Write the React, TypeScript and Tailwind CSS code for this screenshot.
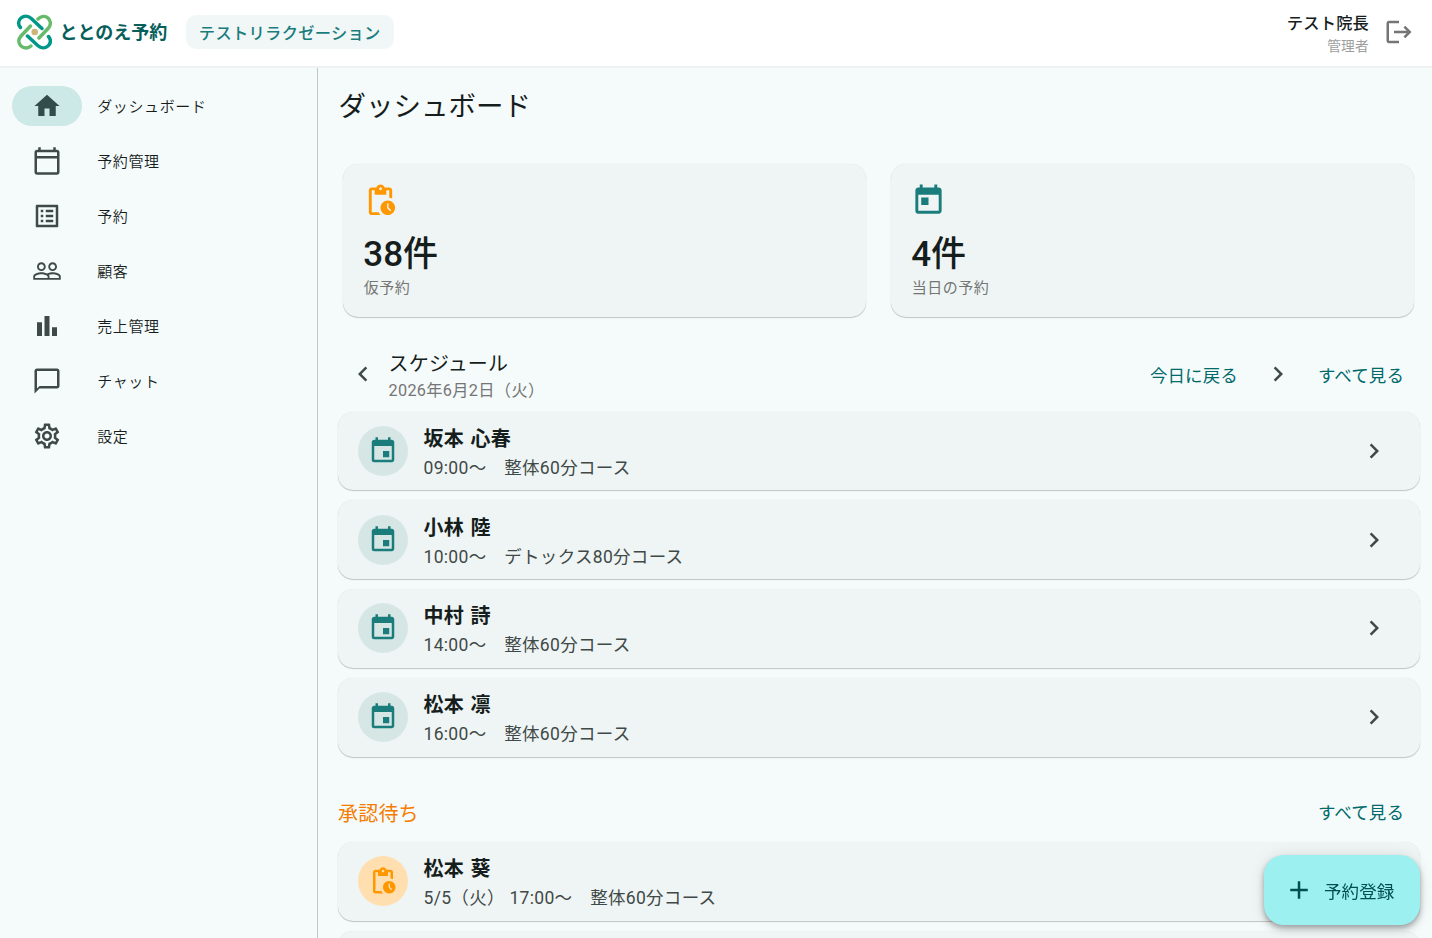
import React from 'react';
import type { IconType } from 'react-icons';
import {
    MdAdd, MdBarChart, MdChevronLeft, MdChevronRight, MdEvent, MdHome, MdLogout, MdOutlineCalendarToday,
    MdOutlineChatBubbleOutline, MdOutlineListAlt, MdOutlineSettings, MdPendingActions, MdPeopleOutline, MdToday,
} from 'react-icons/md';

interface NavItem {
    label: string;
    icon: IconType;
    active?: boolean;
}

interface Booking {
    name: string;
    detail: string;
}

const NAV_ITEMS: NavItem[] = [
    { label: 'ダッシュボード', icon: MdHome, active: true },
    { label: '予約管理', icon: MdOutlineCalendarToday },
    { label: '予約', icon: MdOutlineListAlt },
    { label: '顧客', icon: MdPeopleOutline },
    { label: '売上管理', icon: MdBarChart },
    { label: 'チャット', icon: MdOutlineChatBubbleOutline },
    { label: '設定', icon: MdOutlineSettings },
];

const SCHEDULE: Booking[] = [
    { name: '坂本 心春', detail: '09:00〜　整体60分コース' },
    { name: '小林 陸', detail: '10:00〜　デトックス80分コース' },
    { name: '中村 詩', detail: '14:00〜　整体60分コース' },
    { name: '松本 凛', detail: '16:00〜　整体60分コース' },
];

const PENDING: Booking[] = [
    { name: '松本 葵', detail: '5/5（火） 17:00〜　整体60分コース' },
];

const CARD = 'rounded-[15px] bg-[#eff5f4] shadow-[0_1px_1px_rgba(0,0,0,0.21),0_0_1px_rgba(0,0,0,0.12)]';

const Logo: React.FC = () => (
    <div className="flex items-center">
        <svg className="w-9 h-9 shrink-0" viewBox="0 0 36 36" fill="none" strokeWidth="3.5" strokeLinecap="round">
            <path d="M22 5 C25 2 29 1.500 32 4 C35 7 35 11 32.500 14 L23 24" stroke="#66bb6a" />
            <path d="M15 32 C12 34.500 8 34.500 5 32 C2 29 2.300 25 5 22 L14.500 12" stroke="#66bb6a" />
            <path d="M4.500 13.500 C1.800 10.500 2 6.500 5 4 C8 1.500 12 1.500 15 4.200 L26 14.500" stroke="#009688" />
            <path d="M32.500 22.500 C35.200 25.500 35 29.500 32 32 C29 34.500 25 34.500 22 31.800 L11.500 22" stroke="#009688" />
            <circle cx="18.700" cy="18" r="3.3" fill="#cdb578" />
        </svg>
        <span className="mt-[1px] ml-[7.5px] text-[18px] leading-6 font-bold text-[#075e5b] whitespace-nowrap">ととのえ予約</span>
    </div>
);

const Header: React.FC = () => (
    <header className="h-[68px] shrink-0 flex items-center justify-between bg-white border-b-2 border-[#eef2f2] pl-4 pr-[18px] pb-[2px]">
        <div className="flex items-center">
            <Logo />
            <div className="ml-[18.5px] h-[34px] px-[13px] pt-[4px] flex items-center rounded-[10px] bg-[#f1f7f7] text-[16.25px] tracking-[0.31px] font-medium text-[#1b7c7c] whitespace-nowrap">
                テストリラクゼーション
            </div>
        </div>
        <div className="flex items-center">
            <div className="pt-[4px] text-right whitespace-nowrap">
                <p className="text-[16.25px] leading-[23px] tracking-[0.18px] font-medium text-[#161d1d]">テスト院長</p>
                <p className="text-[13.75px] leading-[22px] tracking-[0.2px] text-[#9e9e9e]">管理者</p>
            </div>
            <button className="ml-[15px] text-[#757575]" aria-label="ログアウト">
                <MdLogout size={30} />
            </button>
        </div>
    </header>
);

const Sidebar: React.FC = () => (
    <nav className="w-[318px] shrink-0 border-r border-[#bec8c8] pt-[10px] pl-3">
        {NAV_ITEMS.map(({ label, icon: Icon, active }) => (
            <a key={label} className="h-[55px] flex items-center cursor-pointer">
                <span className={`w-[70px] h-10 rounded-full flex items-center justify-center ${active ? 'bg-[#cce8e7] text-[#324b4b]' : 'text-[#3f4948]'}`}>
                    <Icon size={30} />
                </span>
                <span className="ml-[15.2px] pt-[3px] text-[15px] font-[350] tracking-[0.63px] text-[#161d1d]">{label}</span>
            </a>
        ))}
    </nav>
);

interface StatCardProps {
    icon: IconType;
    iconClass: string;
    value: string;
    label: string;
}

const StatCard: React.FC<StatCardProps> = ({ icon: Icon, iconClass, value, label }) => (
    <div className={`flex-1 h-[153px] px-5 pt-[19px] ${CARD}`}>
        <Icon size={35} className={iconClass} />
        <p className="mt-[15px] text-[35px] leading-[44px] font-medium text-[#161d1d]">{value}</p>
        <p className="mt-[1px] ml-[0.5px] text-[15px] leading-5 tracking-[0.5px] text-[#757575]">{label}</p>
    </div>
);

const BookingRow: React.FC<{ booking: Booking; pending?: boolean }> = ({ booking, pending }) => (
    <div className={`h-[78.75px] shrink-0 flex items-center pl-5 pr-[30.5px] ${CARD}`}>
        <div className={`w-[50px] h-[50px] rounded-full flex items-center justify-center ${pending ? 'bg-[#ffdfb0] text-[#ff9800]' : 'bg-[#d5e6e5] text-[#1b7c7c]'}`}>
            {pending ? <MdPendingActions size={30} /> : <MdEvent size={30} />}
        </div>
        <div className="ml-[15.5px] pt-[4px] flex-1 whitespace-nowrap">
            <p className="text-[20px] leading-[30px] tracking-[0.19px] [word-spacing:1.5px] font-semibold text-[#161d1d]">{booking.name}</p>
            <p className="text-[17.5px] leading-[28px] tracking-[0.31px] text-[#3f4948]">{booking.detail}</p>
        </div>
        <MdChevronRight size={30} className="text-[#3f4948]" />
    </div>
);

const TextButton: React.FC<{ children: React.ReactNode }> = ({ children }) => (
    <button className="text-[17.5px] leading-[26px] tracking-[0.1px] text-[#006a6a] whitespace-nowrap">{children}</button>
);

export default function App() {
    return (
        <div className="h-[938px] w-full overflow-hidden flex flex-col bg-[#f5fbfb] font-[Roboto,'Noto_Sans_CJK_JP',sans-serif]">
            <Header />
            <div className="flex-1 min-h-0 flex">
                <Sidebar />
                <main className="flex-1 min-w-0 overflow-hidden pl-5 pr-[12.5px]">
                    <h1 className="mt-[21px] ml-[0.5px] text-[27.5px] leading-[35px] text-[#161d1d]">ダッシュボード</h1>
                    <section className="mt-[39.5px] pl-[5.3px] pr-[5.5px] flex gap-[25px]">
                        <StatCard icon={MdPendingActions} iconClass="text-[#ff9800]" value="38件" label="仮予約" />
                        <StatCard icon={MdToday} iconClass="text-[#1b7c7c]" value="4件" label="当日の予約" />
                    </section>

                    <section>
                        <div className="mt-[33px] h-[52px] flex items-center pl-[10px] pr-[15.5px]">
                            <MdChevronLeft size={30} className="mb-[3px] text-[#3f4948]" />
                            <div className="ml-[10.5px] pt-[3px] flex-1 whitespace-nowrap">
                                <h2 className="text-[20px] leading-[27px] tracking-[0.19px] text-[#161d1d]">スケジュール</h2>
                                <p className="text-[16.25px] leading-[25px] tracking-[0.31px] text-[#757575]">2026年6月2日（火）</p>
                            </div>
                            <TextButton>今日に戻る</TextButton>
                            <MdChevronRight size={30} className="mx-[25px] mb-[3px] text-[#3f4948]" />
                            <TextButton>すべて見る</TextButton>
                        </div>
                        <div className="mt-[10px] flex flex-col gap-[10px]">
                            {SCHEDULE.map(b => <BookingRow key={b.name} booking={b} />)}
                        </div>
                    </section>

                    <section>
                        <div className="mt-[42.5px] h-[28px] flex items-center justify-between pr-[15.5px]">
                            <h2 className="pt-[2px] text-[20px] leading-[28px] tracking-[0.19px] text-[#f57c00]">承認待ち</h2>
                            <TextButton>すべて見る</TextButton>
                        </div>
                        <div className="mt-[15px] flex flex-col gap-[10px]">
                            {PENDING.map(b => <BookingRow key={b.detail} booking={b} pending />)}
                            <div className={`h-[78.75px] ${CARD}`} />
                        </div>
                    </section>
                </main>
            </div>

            <button className="fixed right-[12.5px] bottom-[13px] w-[156px] h-[70px] flex items-center pl-5 rounded-[20px] bg-[#9cf1f0] text-[#004f4f] shadow-[0_3px_5px_rgba(0,0,0,0.22),0_5px_10px_rgba(0,0,0,0.14),0_1px_15px_rgba(0,0,0,0.1)]">
                <MdAdd size={30} />
                <span className="ml-[10.5px] pt-[4px] text-[17.5px] tracking-[0.12px] whitespace-nowrap">予約登録</span>
            </button>
        </div>
    );
}
